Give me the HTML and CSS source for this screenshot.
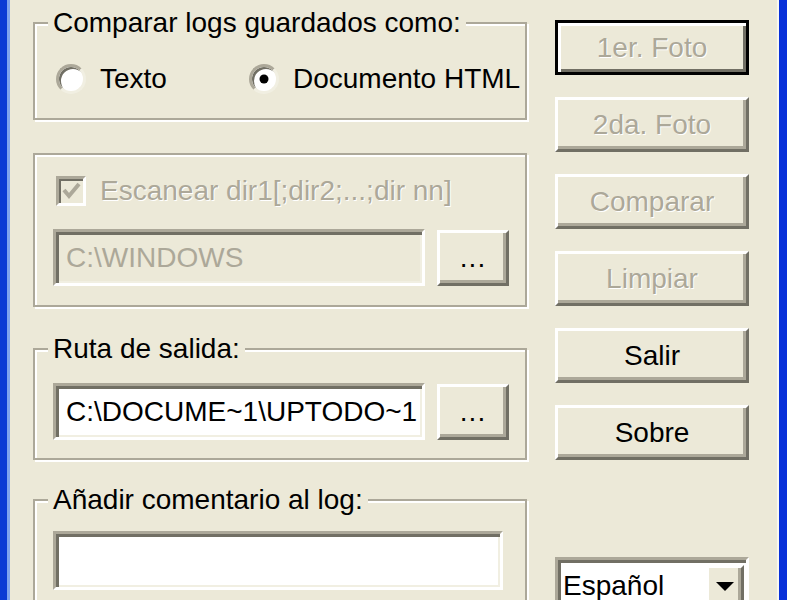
FILE: index.html
```html
<!DOCTYPE html>
<html lang="es">
<head>
    <meta charset="UTF-8">
    <title>Comparar logs</title>
    <link rel="stylesheet" href="styles.css">
</head>
<body>
    <div class="window">
        <div class="left">
            <fieldset class="group group-format">
                <legend>Comparar logs guardados como:</legend>
                <div class="radios">
                    <label class="opt opt-first"><span class="radio"></span>Texto</label>
                    <label class="opt"><span class="radio checked"></span>Documento HTML</label>
                </div>
            </fieldset>

            <fieldset class="group group-scan">
                <div class="check-row">
                    <span class="check">
                        <svg width="24" height="24" viewBox="0 0 24 24">
                            <polyline points="5,11 10,17 20,5" fill="none" stroke="#aca899" stroke-width="4"/>
                        </svg>
                    </span>
                    Escanear dir1[;dir2;...;dir nn]
                </div>
                <div class="path-row">
                    <div class="field disabled">C:\WINDOWS</div>
                    <div class="btn btn-dots">...</div>
                </div>
            </fieldset>

            <fieldset class="group group-out">
                <legend>Ruta de salida:</legend>
                <div class="path-row path-row-out">
                    <div class="field">C:\DOCUME~1\UPTODO~1</div>
                    <div class="btn btn-dots">...</div>
                </div>
            </fieldset>

            <fieldset class="group group-comment">
                <legend>Añadir comentario al log:</legend>
                <div class="field field-wide"></div>
            </fieldset>
        </div>

        <div class="right">
            <div class="btn btn-side default disabled">1er. Foto</div>
            <div class="btn btn-side disabled">2da. Foto</div>
            <div class="btn btn-side disabled">Comparar</div>
            <div class="btn btn-side disabled">Limpiar</div>
            <div class="btn btn-side">Salir</div>
            <div class="btn btn-side">Sobre</div>
            <div class="combo">
                <span class="combo-text">Español</span>
                <span class="btn combo-arrow"><span class="tri"></span></span>
            </div>
        </div>
    </div>
</body>
</html>
```

FILE: styles.css
```css
body {
    margin: 0;
    background: #ece9d8;
    font-family: "Liberation Sans", Arial, sans-serif;
    font-size: 28px;
    color: #000;
}

.window {
    display: flex;
    gap: 28px;
    height: 600px;
    box-sizing: border-box;
    padding: 7px 30px 0 26px;
    border-left: 7px solid #0b3bd4;
    border-right: 8px solid #0831d9;
    box-shadow: inset 3px 0 0 #7fa4ee, inset -2px 0 0 #f8f7f2;
    overflow: hidden;
}

.left {
    width: 494px;
    flex: none;
    display: flex;
    flex-direction: column;
}

.group {
    flex: none;
    margin: 0;
    min-width: 0;
    box-sizing: border-box;
    padding: 0 0 0 18px;
    border: 2px solid #aca899;
    box-shadow: inset 2px 2px 0 #fff, 2px 2px 0 #fff;
}

.group legend {
    padding: 0 5px;
    margin-left: -5px;
    line-height: 32px;
    background: #ece9d8;
}

.group-format {
    height: 113px;
    padding-top: 24px;
}

.group-scan {
    margin-top: 33px;
    height: 154px;
    padding-top: 20px;
}

.group-out {
    margin-top: 26px;
    height: 127px;
    padding-top: 18px;
}

.group-comment {
    margin-top: 24px;
    height: 150px;
    padding-top: 15px;
}

.radios {
    display: flex;
    align-items: center;
    height: 32px;
    margin-left: 3px;
}

.opt {
    display: flex;
    align-items: center;
    gap: 14px;
}

.opt-first {
    width: 193px;
}

.radio {
    position: relative;
    width: 30px;
    height: 30px;
    box-sizing: border-box;
    border-radius: 50%;
    border: 3px solid;
    border-color: #aca899 #f1efe2 #f1efe2 #aca899;
    background: #fff;
    box-shadow: inset 2px 2px 0 #716f64;
}

.radio.checked::after {
    content: "";
    position: absolute;
    left: 50%;
    top: 50%;
    width: 9px;
    height: 9px;
    border-radius: 50%;
    background: #000;
    transform: translate(-50%, -50%);
}

.check-row {
    display: flex;
    align-items: center;
    gap: 14px;
    height: 32px;
    margin-left: 3px;
    color: #aca899;
    text-shadow: 1px 1px 0 #fff;
}

.check {
    display: flex;
    align-items: center;
    justify-content: center;
    width: 30px;
    height: 30px;
    box-sizing: border-box;
    border: 3px solid;
    border-color: #aca899 #fff #fff #aca899;
    box-shadow: inset 2px 2px 0 #716f64;
    background: #ece9d8;
}

.path-row {
    display: flex;
    align-items: center;
    gap: 12px;
    margin-top: 22px;
}

.path-row-out {
    margin-top: 0;
}

.field {
    width: 372px;
    height: 57px;
    flex: none;
    box-sizing: border-box;
    display: flex;
    align-items: center;
    padding-left: 10px;
    border: 3px solid;
    border-color: #aca899 #fff #fff #aca899;
    box-shadow: inset 3px 3px 0 #716f64, inset -2px -2px 0 #f1efe2;
    background: #fff;
    white-space: nowrap;
    overflow: hidden;
}

.field.disabled {
    background: #ece9d8;
    color: #aca899;
}

.field-wide {
    width: 450px;
    height: 59px;
}

.btn {
    flex: none;
    box-sizing: border-box;
    display: flex;
    align-items: center;
    justify-content: center;
    border: 3px solid;
    border-color: #fff #716f64 #716f64 #fff;
    box-shadow: inset -3px -3px 0 #aca899;
    background: #ece9d8;
}

.btn-dots {
    width: 72px;
    height: 56px;
    letter-spacing: 1px;
}

.right {
    width: 194px;
    flex: none;
    display: flex;
    flex-direction: column;
    gap: 22px;
    padding-top: 13px;
}

.btn-side {
    height: 55px;
}

.btn.default {
    border-color: #000;
    box-shadow: inset 3px 3px 0 #fff, inset -3px -3px 0 #716f64;
}

.btn.disabled {
    color: #aca899;
    text-shadow: 1px 1px 0 #fff;
}

.combo {
    flex: none;
    display: flex;
    height: 62px;
    margin-top: 75px;
    box-sizing: border-box;
    border: 3px solid;
    border-color: #aca899 #fff #fff #aca899;
    box-shadow: inset 3px 3px 0 #716f64;
    background: #fff;
}

.combo-text {
    flex: 1;
    padding: 10px 0 0 5px;
    line-height: 32px;
}

.combo-arrow {
    width: 38px;
    height: 50px;
    margin: 5px 2px 0 0;
    align-items: flex-start;
    padding-top: 14px;
}

.tri {
    width: 0;
    height: 0;
    border-left: 9px solid transparent;
    border-right: 9px solid transparent;
    border-top: 9px solid #000;
}
```
